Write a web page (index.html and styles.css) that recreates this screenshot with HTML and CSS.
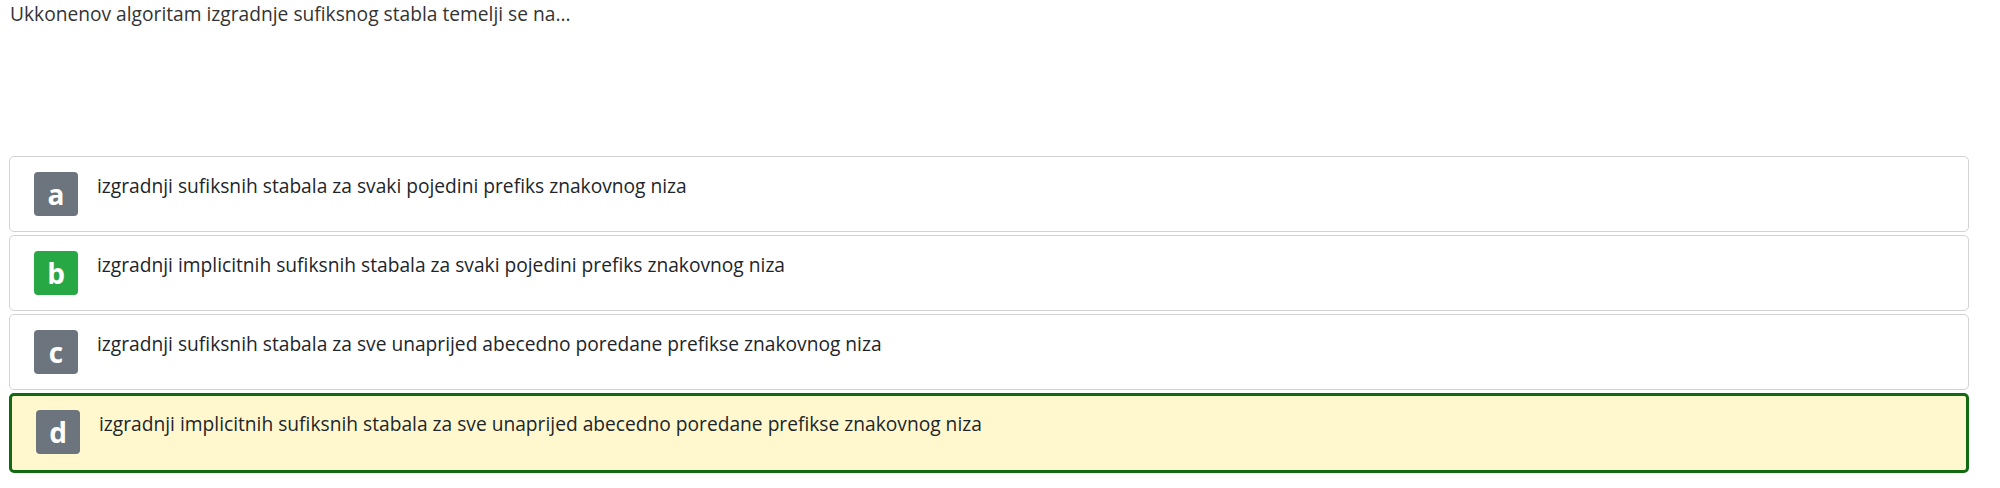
FILE: index.html
```html
<!DOCTYPE html>
<html lang="hr">
<head>
<meta charset="utf-8">
<title>Pitanje</title>
<link rel="stylesheet" href="styles.css">
</head>
<body>
<div class="page">
  <div class="question">Ukkonenov algoritam izgradnje sufiksnog stabla temelji se na...</div>
  <div class="answers">
    <div class="answer">
      <span class="badge">a</span>
      <span class="text">izgradnji sufiksnih stabala za svaki pojedini prefiks znakovnog niza</span>
    </div>
    <div class="answer">
      <span class="badge badge-correct">b</span>
      <span class="text">izgradnji implicitnih sufiksnih stabala za svaki pojedini prefiks znakovnog niza</span>
    </div>
    <div class="answer">
      <span class="badge">c</span>
      <span class="text">izgradnji sufiksnih stabala za sve unaprijed abecedno poredane prefikse znakovnog niza</span>
    </div>
    <div class="answer answer-selected">
      <span class="badge">d</span>
      <span class="text">izgradnji implicitnih sufiksnih stabala za sve unaprijed abecedno poredane prefikse znakovnog niza</span>
    </div>
  </div>
</div>
</body>
</html>
```

FILE: styles.css
```css
html, body {
  margin: 0;
  padding: 0;
  background: #ffffff;
}

body {
  font-family: "Open Sans", "Noto Sans", sans-serif;
  font-size: 19.2px;
  color: #212529;
}

.page {
  padding: 0 31px 0 9px;
}

.question {
  padding: 2px 0 0 1px;
  line-height: 24px;
  color: #333333;
  height: 154px;
}

.answers {
  display: flex;
  flex-direction: column;
  gap: 3px;
}

.answer {
  display: flex;
  align-items: flex-start;
  gap: 19px;
  border: 1px solid #d3d3d3;
  border-radius: 5px;
  padding: 15px 24px;
  background: #ffffff;
}

.answer-selected {
  border: 3px solid #126b12;
  padding: 14px 24px 16px 24px;
  background: #fff8cf;
}

.badge {
  flex: 0 0 auto;
  width: 44px;
  height: 44px;
  border-radius: 4px;
  background: #6c757d;
  color: #ffffff;
  font-weight: 700;
  font-size: 28px;
  line-height: 44px;
  text-align: center;
}

.badge-correct {
  background: #28a745;
}

.text {
  padding-top: 2px;
  line-height: 24px;
}
```
